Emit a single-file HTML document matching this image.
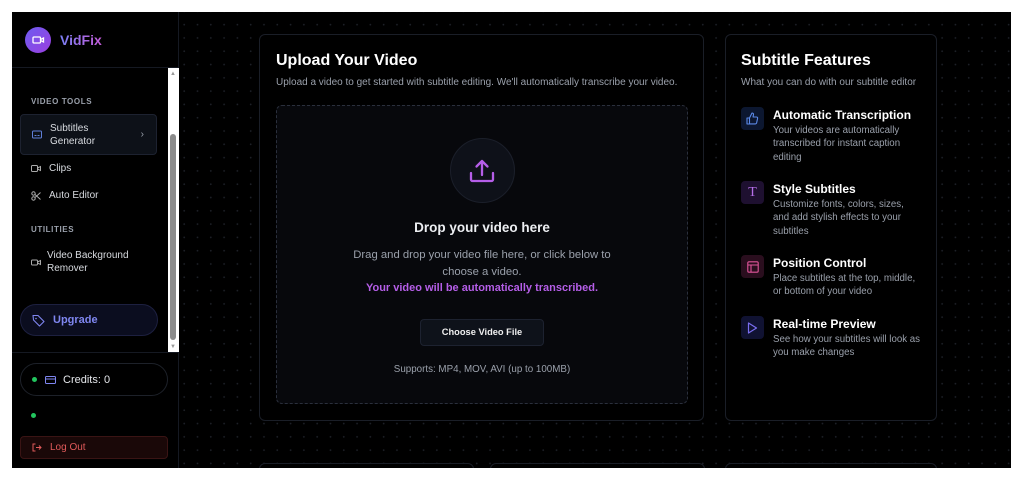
<!DOCTYPE html>
<html><head><meta charset="utf-8"><style>
*{box-sizing:border-box;margin:0;padding:0}
body{width:1024px;height:482px;background:#fff;font-family:"Liberation Sans",sans-serif;overflow:hidden;position:relative}
#app{position:absolute;left:12px;top:12px;width:999px;height:456px;background:#000 radial-gradient(circle,#1d2027 0.7px,transparent 1.1px);background-size:13.3px 13.3px;background-position:6px 6px;overflow:hidden}
#side{position:absolute;left:0;top:0;width:167px;height:456px;background:#000;border-right:1px solid #151922}
.hdr{height:56px;border-bottom:1px solid #151922;display:flex;align-items:center;padding-left:13px}
.logo{width:26px;height:26px;border-radius:50%;background:linear-gradient(135deg,#6d5cf0,#9b3fe0);display:flex;align-items:center;justify-content:center}
.brand{margin-left:9px;font-weight:bold;font-size:14px;background:linear-gradient(90deg,#7b7ff5,#c45bd8);-webkit-background-clip:text;color:transparent}
.sec{position:absolute;left:19px;font-size:8px;color:#9aa0ab;letter-spacing:.6px;font-weight:bold}
.item{position:absolute;left:8px;width:137px;display:flex;align-items:center;font-size:10px;color:#d8dbe0;line-height:13px}
.item svg{margin:0 8px 0 11px;flex:none}
.sb{position:absolute;left:156px;top:56px;width:11px;height:284px;background:#fff}
.thumb{position:absolute;left:2px;top:66px;width:6px;height:206px;background:#8b8b8b;border-radius:3px}
.card{position:absolute;background:#000;border:1px solid #1a1e27;border-radius:6px}
h2{font-size:16px;color:#fff;font-weight:bold}
.sub{font-size:10px;color:#9aa0ab;margin-top:7px}
.feat{position:absolute;left:15px;display:flex}
.fi{width:23px;height:23px;border-radius:4px;display:flex;align-items:center;justify-content:center;flex:none}
.ft{margin-left:9px}
.ft b{display:block;font-size:12px;color:#fff;margin-top:1px}
.ft p{font-size:9.7px;color:#9aa0ab;line-height:13.3px;margin-top:2px;width:148px}
</style></head><body><div id="app">
<div id="side">
 <div class="hdr"><div class="logo"><svg width="13" height="10" viewBox="0 0 13 10"><rect x="1" y="2" width="7.5" height="6" rx="1" fill="none" stroke="#fff" stroke-width="1.3"/><path d="M8.5 4.5l3-1.5v4l-3-1.5" fill="none" stroke="#fff" stroke-width="1.3"/></svg></div><span class="brand">VidFix</span></div>
 <div class="sec" style="top:85px">VIDEO TOOLS</div>
 <div class="item" style="top:102px;height:41px;background:#0d1118;border:1px solid #1d2230;border-radius:4px"><svg width="10" height="9" viewBox="0 0 10 9"><rect x=".5" y="1" width="9" height="7" rx="1" fill="none" stroke="#5f7fd8"/><path d="M2.5 5.5h2M5.5 5.5h2" stroke="#5f7fd8"/></svg><span>Subtitles<br>Generator</span><span style="margin-left:auto;margin-right:12px;color:#9aa0ab">›</span></div>
 <div class="item" style="top:150px"><svg width="10" height="9" viewBox="0 0 10 9"><rect x=".5" y="1.5" width="6" height="6" rx="1" fill="none" stroke="#aaa"/><path d="M6.5 4l3-1.5v4l-3-1.5" fill="none" stroke="#aaa"/></svg>Clips</div>
 <div class="item" style="top:177px"><svg width="10" height="10" viewBox="0 0 10 10"><circle cx="2.5" cy="2.5" r="1.7" fill="none" stroke="#aaa"/><circle cx="2.5" cy="7.5" r="1.7" fill="none" stroke="#aaa"/><path d="M4 3.5l5.5 5M4 6.5l5.5-5" stroke="#aaa"/></svg>Auto Editor</div>
 <div class="sec" style="top:213px">UTILITIES</div>
 <div class="item" style="top:237px"><svg width="10" height="9" viewBox="0 0 10 9" style="margin-right:6px"><rect x=".5" y="2" width="6" height="5" rx="1" fill="none" stroke="#aaa"/><path d="M6.5 4l3-1.5v4l-3-1.5" fill="none" stroke="#aaa"/></svg><span>Video Background<br>Remover</span></div>
 <div style="position:absolute;left:8px;top:292px;width:138px;height:32px;border-radius:16px;background:#0b0d1f;border:1px solid #1d2040;display:flex;align-items:center;padding-left:11px;color:#7f86f0;font-weight:bold;font-size:11px"><svg width="13" height="13" viewBox="0 0 13 13" style="margin-right:8px"><path d="M1 1.5h5l6 6-4.5 4.5-6-6z" fill="none" stroke="#7f86f0" stroke-width="1.1" stroke-linejoin="round"/><circle cx="4" cy="4.5" r=".8" fill="#7f86f0"/></svg>Upgrade</div>
 <div class="sb"><div class="thumb"></div><div style="position:absolute;left:2px;top:3px;font-size:6px;color:#999">▲</div><div style="position:absolute;left:2px;bottom:2px;font-size:6px;color:#999">▼</div></div>
 <div style="position:absolute;left:0;top:340px;width:167px;border-top:1px solid #151922"></div>
 <div style="position:absolute;left:8px;top:351px;width:148px;height:33px;border-radius:17px;border:1px solid #1d2129;display:flex;align-items:center;padding-left:11px;color:#e5e7eb;font-size:11px"><span style="width:5px;height:5px;border-radius:50%;background:#22c55e;margin-right:8px"></span><svg width="11" height="8" viewBox="0 0 11 8" style="margin-right:7px"><rect x=".5" y=".5" width="10" height="7" rx="1" fill="none" stroke="#7f86f0"/><path d="M.5 3h10" stroke="#7f86f0"/></svg>Credits: 0</div>
 <span style="position:absolute;left:19px;top:401px;width:5px;height:5px;border-radius:50%;background:#22c55e"></span>
 <div style="position:absolute;left:8px;top:424px;width:148px;height:23px;border-radius:4px;background:#1a0808;border:1px solid #3a1414;display:flex;align-items:center;padding-left:11px;color:#e05a5a;font-size:10px"><svg width="10" height="9" viewBox="0 0 10 9" style="margin-right:8px"><path d="M3.5 1H1v7h2.5M4 4.5h5M7 2.5l2 2-2 2" fill="none" stroke="#e05a5a"/></svg>Log Out</div>
</div>

<div class="card" style="left:247px;top:22px;width:445px;height:387px;padding:17px 16px">
 <h2>Upload Your Video</h2>
 <div class="sub">Upload a video to get started with subtitle editing. We'll automatically transcribe your video.</div>
 <div style="position:absolute;left:16px;top:70px;width:412px;height:299px;border:1px dashed #2a2f3c;border-radius:6px;background:#07080c;text-align:center">
  <div style="width:65px;height:65px;border-radius:50%;background:#0e1119;border:1px solid #1b1f2a;margin:32px auto 0;display:flex;align-items:center;justify-content:center"><svg width="30" height="30" viewBox="0 0 30 30"><path d="M15 19V5M9.5 10.5L15 5l5.5 5.5M4 17v6.5a1.5 1.5 0 0 0 1.5 1.5h19a1.5 1.5 0 0 0 1.5-1.5V17" fill="none" stroke="#b55ee8" stroke-width="2.3" stroke-linecap="round" stroke-linejoin="round"/></svg></div>
  <div style="font-size:13.5px;font-weight:bold;color:#eceef2;margin-top:17px">Drop your video here</div>
  <div style="font-size:11.3px;color:#9aa0ab;line-height:16.5px;margin-top:12px">Drag and drop your video file here, or click below to<br>choose a video.<br><span style="color:#b55ee8;font-weight:bold;font-size:11px">Your video will be automatically transcribed.</span></div>
  <div style="width:124px;height:27px;margin:22px auto 0;border-radius:4px;background:#0e121a;border:1px solid #1d2230;color:#f0f0f0;font-size:9.3px;font-weight:bold;line-height:25px">Choose Video File</div>
  <div style="font-size:9.8px;color:#9aa0ab;margin-top:18px">Supports: MP4, MOV, AVI (up to 100MB)</div>
 </div>
</div>

<div class="card" style="left:713px;top:22px;width:212px;height:387px;padding:17px 15px">
 <h2>Subtitle Features</h2>
 <div class="sub">What you can do with our subtitle editor</div>
 <div class="feat" style="top:72px"><div class="fi" style="background:#0c1730"><svg width="13" height="13" viewBox="0 0 13 13"><path d="M1 6h2.5v6H1zM3.5 6l2.5-5c1 0 1.7.7 1.5 1.8L7 5h3.5c.8 0 1.3.7 1.1 1.4l-1 4.5c-.2.6-.6 1-1.2 1H3.5" fill="none" stroke="#5b8ae8" stroke-width="1.1" stroke-linejoin="round"/></svg></div><div class="ft"><b>Automatic Transcription</b><p>Your videos are automatically transcribed for instant caption editing</p></div></div>
 <div class="feat" style="top:146px"><div class="fi" style="background:#1e1030"><span style="color:#b56ee8;font-family:'Liberation Serif',serif;font-size:14px">T</span></div><div class="ft"><b>Style Subtitles</b><p>Customize fonts, colors, sizes, and add stylish effects to your subtitles</p></div></div>
 <div class="feat" style="top:220px"><div class="fi" style="background:#2a0e1e"><svg width="12" height="12" viewBox="0 0 12 12"><rect x=".8" y=".8" width="10.4" height="10.4" rx="1.2" fill="none" stroke="#e0559a" stroke-width="1.1"/><path d="M.8 4h10.4M4 4v7.2" stroke="#e0559a" stroke-width="1.1"/></svg></div><div class="ft"><b>Position Control</b><p>Place subtitles at the top, middle, or bottom of your video</p></div></div>
 <div class="feat" style="top:281px"><div class="fi" style="background:#101232"><svg width="11" height="12" viewBox="0 0 11 12"><path d="M1.5 1l8 5-8 5z" fill="none" stroke="#7a6ef0" stroke-width="1.2" stroke-linejoin="round"/></svg></div><div class="ft"><b>Real-time Preview</b><p>See how your subtitles will look as you make changes</p></div></div>
</div>

<div class="card" style="left:247px;top:451px;width:215px;height:40px"></div>
<div class="card" style="left:478px;top:451px;width:215px;height:40px"></div>
<div class="card" style="left:713px;top:451px;width:212px;height:40px"></div>
</div></body></html>
